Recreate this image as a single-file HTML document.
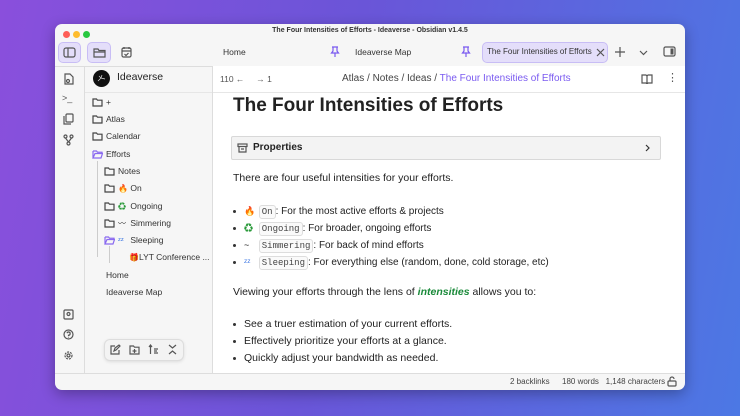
<!DOCTYPE html>
<html><head><meta charset="utf-8"><style>
*{box-sizing:border-box;margin:0;padding:0}
body{width:740px;height:416px;overflow:hidden;font-family:"Liberation Sans","Noto Sans CJK JP",sans-serif;background:linear-gradient(100deg,#8a4fdc 0%,#6a55d8 45%,#4c78e4 100%);position:relative}
.win{position:absolute;left:55px;top:24px;width:630px;height:366px;background:#f6f6f6;border-radius:7px;overflow:hidden;box-shadow:0 4px 14px rgba(0,0,0,.3)}
.abs{position:absolute}
.dot{position:absolute;top:7px;width:7px;height:7px;border-radius:50%}
.title{position:absolute;top:3px;left:0;width:630px;text-align:center;font-size:7px;font-weight:bold;color:#333}
.t{font-size:8.5px;color:#333;position:absolute;white-space:nowrap}
.ic{position:absolute;stroke:#555;fill:none;stroke-width:1.2}
.sel{position:absolute;background:#e4defa;border:1px solid #c8bdf5;border-radius:5px}
.fi{position:absolute;font-size:8.5px;color:#333;white-space:nowrap;line-height:11px}
.content{position:absolute;left:158px;top:42px;width:472px;height:307px;background:#fff}
.li{position:absolute;left:18px;font-size:10px;color:#222;white-space:nowrap;line-height:13px;height:13px}
.e{font-size:9px;display:inline-block;width:12px;line-height:12px}
.fe{font-size:8px;display:inline-block;width:10px;line-height:11px}
.code{font-family:"Liberation Mono",monospace;font-size:9px;border:1px solid #ddd;border-radius:3px;padding:0 2px;background:#fafafa;color:#444;line-height:12px;display:inline-block}
.b{display:inline-block;width:3px;height:3px;border-radius:50%;background:#333;margin-right:8px;vertical-align:middle}
</style></head><body>
<div class="win">
<div class="dot" style="left:8px;background:#fe5f57"></div>
<div class="dot" style="left:18px;background:#febc2e"></div>
<div class="dot" style="left:28px;background:#28c840"></div>
<div class="title">The Four Intensities of Efforts - Ideaverse - Obsidian v1.4.5</div>
<div class="sel" style="left:3px;top:18px;width:23px;height:21px"></div>
<svg class="ic" style="left:8px;top:23px" width="13" height="11"><rect x="1" y="1" width="11" height="9" rx="2"/><line x1="5" y1="1" x2="5" y2="10"/></svg>
<div class="sel" style="left:32px;top:18px;width:24px;height:21px"></div>
<svg class="ic" style="left:38px;top:23px" width="13" height="11"><path d="M1 2h4l1 1.5h6v6.5h-11z M1 5h11"/></svg>
<svg class="ic" style="left:66px;top:22px" width="11" height="12"><rect x="1" y="2" width="9" height="9" rx="1.5"/><path d="M3 1v2M8 1v2M1 5h9M3.5 8l1.5 1.5 2.5-2.5"/></svg>
<div class="t" style="left:168px;top:23px">Home</div>
<svg class="ic" style="left:275px;top:22px;stroke:#7a5af0" width="10" height="12"><path d="M2 1h6M3 1v4L1.5 7h7L7 5V1M5 7v4"/></svg>
<div class="t" style="left:300px;top:23px">Ideaverse Map</div>
<svg class="ic" style="left:406px;top:22px;stroke:#7a5af0" width="10" height="12"><path d="M2 1h6M3 1v4L1.5 7h7L7 5V1M5 7v4"/></svg>
<div class="sel" style="left:427px;top:18px;width:126px;height:21px"></div>
<div class="t" style="left:432px;top:23px;font-size:8px">The Four Intensities of Efforts</div>
<svg class="ic" style="left:541px;top:24px" width="9" height="9"><path d="M1 1l7 7M8 1l-7 7"/></svg>
<svg class="ic" style="left:560px;top:23px" width="10" height="10"><path d="M5 0v10M0 5h10"/></svg>
<svg class="ic" style="left:584px;top:26px" width="9" height="6"><path d="M1 1l3.5 3.5L8 1"/></svg>
<svg class="ic" style="left:608px;top:22px" width="13" height="11"><rect x="1" y="1" width="11" height="9" rx="1.5"/><rect x="7.5" y="2.5" width="3" height="6" fill="#555" stroke="none"/></svg>
<div class="abs" style="left:0;top:42px;width:630px;height:1px;background:#ddd"></div>
<div class="abs" style="left:29px;top:42px;width:1px;height:307px;background:#ddd"></div>
<svg class="ic" style="left:8px;top:49px" width="11" height="12"><path d="M2 1h5l3 3v7H2z"/><circle cx="5" cy="8" r="1.5"/></svg>
<div class="t" style="left:7px;top:69px;font-size:9px;color:#555">&gt;_</div>
<svg class="ic" style="left:8px;top:89px" width="11" height="12"><rect x="3" y="1" width="7" height="8" rx="1"/><path d="M1 3v8h7"/></svg>
<svg class="ic" style="left:8px;top:110px" width="11" height="12"><circle cx="2.5" cy="2.5" r="1.5"/><circle cx="8.5" cy="2.5" r="1.5"/><circle cx="5.5" cy="9.5" r="1.5"/><path d="M2.5 4l3 4M8.5 4l-3 4"/></svg>
<svg class="ic" style="left:8px;top:285px" width="11" height="11"><rect x="1" y="1" width="9" height="9" rx="1"/><circle cx="5.5" cy="5" r="1.5"/></svg>
<svg class="ic" style="left:8px;top:305px" width="11" height="11"><circle cx="5.5" cy="5.5" r="4.5"/><path d="M4 4.2a1.6 1.6 0 1 1 1.5 2v1M5.5 8.5v.5"/></svg>
<svg class="ic" style="left:8px;top:326px" width="11" height="11"><circle cx="5.5" cy="5.5" r="3.5" stroke-dasharray="2 1"/><circle cx="5.5" cy="5.5" r="1.5"/></svg>
<div class="abs" style="left:30px;top:43px;width:128px;height:306px;background:#f6f6f6"></div>
<div class="abs" style="left:157px;top:42px;width:1px;height:307px;background:#ddd"></div>
<div class="abs" style="left:38px;top:46px;width:17px;height:17px;border-radius:50%;background:#111"></div>
<svg class="abs" style="left:41px;top:49px" width="11" height="11" stroke="#ddd" stroke-width=".7" fill="none"><path d="M2 8l3-3 4 1M5 5l1-3M5 5L3 3"/></svg>
<div class="fi" style="left:62px;top:48px;font-size:10.5px;color:#222">Ideaverse</div>
<div class="abs" style="left:30px;top:68px;width:127px;height:1px;background:#e6e6e6"></div>
<svg class="ic" style="left:37px;top:74px;stroke:#444" width="11" height="9"><path d="M1 1h3.5l1 1.2H10V8H1z"/></svg><div class="fi" style="left:51px;top:73px">+</div>
<svg class="ic" style="left:37px;top:91px;stroke:#444" width="11" height="9"><path d="M1 1h3.5l1 1.2H10V8H1z"/></svg><div class="fi" style="left:51px;top:90px">Atlas</div>
<svg class="ic" style="left:37px;top:108px;stroke:#444" width="11" height="9"><path d="M1 1h3.5l1 1.2H10V8H1z"/></svg><div class="fi" style="left:51px;top:107px">Calendar</div>
<svg class="ic" style="left:37px;top:126px;stroke:#8a6af0" width="11" height="9"><path d="M1 1h3.5l1 1.2H10V3M1 8V1M1 8h8l1.5-4.5H3z"/></svg><div class="fi" style="left:51px;top:125px">Efforts</div>
<div class="abs" style="left:42px;top:137px;width:1px;height:96px;background:#ccc"></div>
<svg class="ic" style="left:49px;top:143px;stroke:#444" width="11" height="9"><path d="M1 1h3.5l1 1.2H10V8H1z"/></svg><div class="fi" style="left:63px;top:142px">Notes</div>
<svg class="ic" style="left:49px;top:160px;stroke:#444" width="11" height="9"><path d="M1 1h3.5l1 1.2H10V8H1z"/></svg><div class="fi" style="left:63px;top:159px"><span class="fe">🔥</span> On</div>
<svg class="ic" style="left:49px;top:178px;stroke:#444" width="11" height="9"><path d="M1 1h3.5l1 1.2H10V8H1z"/></svg><div class="fi" style="left:63px;top:177px"><span class="fe" style="color:#2a9a3a">♻</span> Ongoing</div>
<svg class="ic" style="left:49px;top:195px;stroke:#444" width="11" height="9"><path d="M1 1h3.5l1 1.2H10V8H1z"/></svg><div class="fi" style="left:63px;top:194px"><span class="fe">〰</span> Simmering</div>
<svg class="ic" style="left:49px;top:212px;stroke:#8a6af0" width="11" height="9"><path d="M1 1h3.5l1 1.2H10V3M1 8V1M1 8h8l1.5-4.5H3z"/></svg><div class="fi" style="left:63px;top:211px"><span class="fe" style="color:#2a6ae0">ᶻᶻ</span> Sleeping</div>
<div class="abs" style="left:54px;top:222px;width:1px;height:17px;background:#ccc"></div>
<div class="fi" style="left:74px;top:228px"><span style="font-size:8px">🎁</span>LYT Conference ...</div>
<div class="fi" style="left:51px;top:246px">Home</div>
<div class="fi" style="left:51px;top:263px">Ideaverse Map</div>
<div class="abs" style="left:49px;top:315px;width:80px;height:22px;background:#f3f3f3;border:1px solid #ddd;border-radius:6px;box-shadow:0 1px 3px rgba(0,0,0,.1)"></div>
<svg class="ic" style="left:55px;top:320px" width="11" height="11"><path d="M9 6v4H1V2h4M4 7l1-3 4-3 1 1-4 4z"/></svg>
<svg class="ic" style="left:74px;top:321px" width="11" height="10"><path d="M1 1h3.5l1 1.2H10V9H1zM5.5 4v4M3.5 6h4"/></svg>
<svg class="ic" style="left:93px;top:320px" width="11" height="11"><path d="M2.5 10V1M1 3l1.5-2L4 3M6 5h4M6 7h3M6 9h4"/></svg>
<svg class="ic" style="left:113px;top:320px" width="9" height="11"><path d="M1 1l3.5 3L8 1M1 10l3.5-3L8 10"/></svg>
<div class="content">
<div class="t" style="left:7px;top:8px;font-size:8.5px;color:#555">110 ←&nbsp;&nbsp;&nbsp;&nbsp; → 1</div>
<div class="t" style="left:129px;top:7px;font-size:10px;color:#444">Atlas / Notes / Ideas / <span style="color:#7a5af0">The Four Intensities of Efforts</span></div>
<svg class="ic" style="left:428px;top:8px" width="12" height="10"><path d="M1 1h4l1 1 1-1h4v8H7l-1 1-1-1H1zM6 2v7"/></svg>
<div class="t" style="left:454px;top:5px;font-size:11px;color:#555">⋮</div>
<div class="abs" style="left:0;top:26px;width:472px;height:1px;background:#e6e6e6"></div>
<div class="abs" style="left:20px;top:29px;font-size:19px;font-weight:bold;color:#222;white-space:nowrap">The Four Intensities of Efforts</div>
<div class="abs" style="left:18px;top:70px;width:430px;height:24px;background:#f3f3f3;border:1px solid #d8d8d8;border-radius:2px"></div>
<svg class="ic" style="left:24px;top:77px" width="11" height="10"><rect x="1" y="1" width="9" height="2.5"/><path d="M2 3.5V9h7V3.5M4 6h3"/></svg>
<div class="abs" style="left:40px;top:76px;font-size:10px;font-weight:bold;color:#222">Properties</div>
<svg class="ic" style="left:432px;top:78px;stroke:#333" width="6" height="8"><path d="M1 1l3 3-3 3"/></svg>
<div class="abs" style="left:20px;top:106px;font-size:10.5px;color:#222;white-space:nowrap">There are four useful intensities for your efforts.</div>
<div class="li" style="left:20px;top:139px"><span class="b"></span><span class="e">🔥</span> <span class="code">On</span>: For the most active efforts &amp; projects</div>
<div class="li" style="left:20px;top:156px"><span class="b"></span><span class="e" style="color:#2a9a3a">♻</span> <span class="code">Ongoing</span>: For broader, ongoing efforts</div>
<div class="li" style="left:20px;top:173px"><span class="b"></span><span class="e">~</span> <span class="code">Simmering</span>: For back of mind efforts</div>
<div class="li" style="left:20px;top:190px"><span class="b"></span><span class="e" style="color:#2a6ae0">ᶻᶻ</span> <span class="code">Sleeping</span>: For everything else (random, done, cold storage, etc)</div>
<div class="abs" style="left:20px;top:220px;font-size:10.5px;color:#222;white-space:nowrap">Viewing your efforts through the lens of <i style="color:#1a8a3a;font-weight:bold">intensities</i> allows you to:</div>
<div class="li" style="left:20px;top:252px;font-size:10.5px"><span class="b"></span>See a truer estimation of your current efforts.</div>
<div class="li" style="left:20px;top:269px;font-size:10.5px"><span class="b"></span>Effectively prioritize your efforts at a glance.</div>
<div class="li" style="left:20px;top:286px;font-size:10.5px"><span class="b"></span>Quickly adjust your bandwidth as needed.</div>
</div>
<div class="abs" style="left:0;top:349px;width:630px;height:1px;background:#ddd"></div>
<div class="t" style="left:455px;top:353px;font-size:8px;color:#444">2 backlinks</div>
<div class="t" style="left:507px;top:353px;font-size:8px;color:#444">180 words&nbsp;&nbsp; 1,148 characters</div>
<svg class="ic" style="left:612px;top:352px" width="10" height="11"><rect x="1" y="5" width="8" height="5" rx="1"/><path d="M3 5V3a2 2 0 0 1 4 0"/></svg>
</div>
</body></html>
